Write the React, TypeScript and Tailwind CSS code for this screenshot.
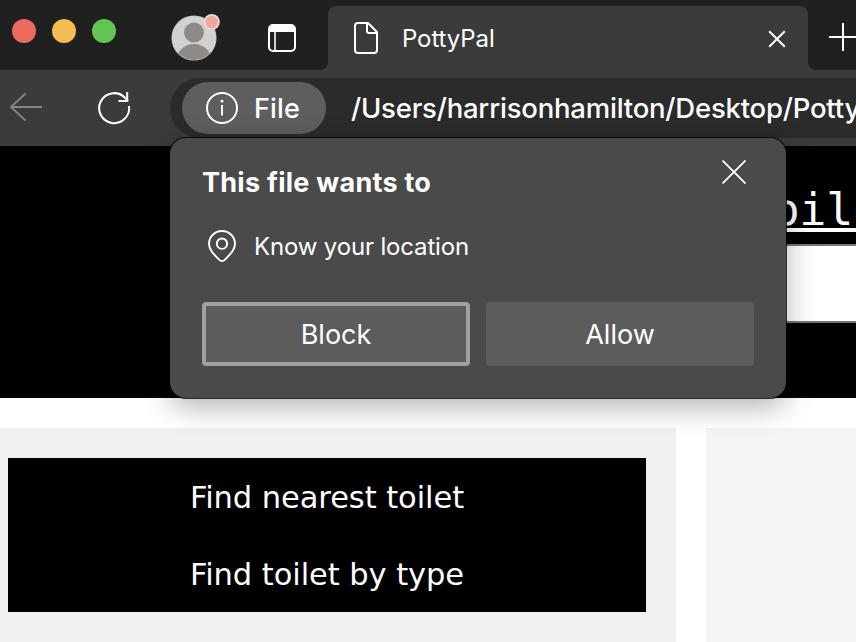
import React from "react";

const UI = "font-['Inter','Roboto',sans-serif]";

function Avatar() {
  return (
    <svg width="52" height="52" viewBox="168 12 52 52">
      <defs>
        <clipPath id="face">
          <circle cx="194" cy="38" r="22" />
        </clipPath>
      </defs>
      <circle cx="194" cy="38" r="22.6" fill="#b9b7b5" />
      <circle cx="194" cy="38" r="22" fill="#d3d1cf" />
      <g clipPath="url(#face)" fill="#8e8a87">
        <circle cx="194" cy="32.5" r="10" />
        <circle cx="194" cy="62.5" r="18.5" />
      </g>
      <circle cx="211.8" cy="22" r="8" fill="#e0dedd" />
      <circle cx="211.8" cy="22" r="6.3" fill="#f1a7a0" />
    </svg>
  );
}

function TabStrip() {
  return (
    <div className="flex h-[70px] w-full bg-[#3b3b3b]">
      <div className="flex w-[328px] shrink-0 rounded-br-lg bg-[#202020]">
        <div className="flex gap-4 pt-[19px] pl-3">
          <span className="size-6 rounded-full bg-[#ed6a5e]" />
          <span className="size-6 rounded-full bg-[#f5bf4f]" />
          <span className="size-6 rounded-full bg-[#61c554]" />
        </div>
        <div className="pt-3 pl-[52px]">
          <Avatar />
        </div>
        <div className="pt-6 pl-12">
          <svg width="28" height="28" viewBox="0 0 28 28" fill="none" stroke="#fff" strokeWidth="2">
            <rect x="1" y="1" width="26" height="26" rx="4" />
            <path d="M1 8V5a4 4 0 0 1 4-4h18a4 4 0 0 1 4 4v3z" fill="#fff" stroke="none" />
            <path d="M7 8v19" strokeWidth="1.6" />
          </svg>
        </div>
      </div>
      <div className="w-[480px] shrink-0 bg-[#202020] pt-[6px]">
        <div className="flex h-16 rounded-t-lg bg-[#3b3b3b] pl-[26px]">
          <svg className="mt-4" width="24" height="32" viewBox="0 0 24 32" fill="none" stroke="#fff" strokeWidth="2" strokeLinejoin="round">
            <path d="M4 1h10l9 9v18a3 3 0 0 1-3 3H4a3 3 0 0 1-3-3V4a3 3 0 0 1 3-3z" />
            <path d="M13 1v8a2 2 0 0 0 2 2h8" />
          </svg>
          <span className={`${UI} mt-4 ml-6 w-[366px] text-[24px] leading-[33px] tracking-[-0.1px] text-white`}>PottyPal</span>
          <svg className="mt-6" width="18" height="18" viewBox="0 0 18 18" stroke="#fff" strokeWidth="2">
            <path d="M1.2 1.2l15.6 15.6M16.8 1.2L1.2 16.8" />
          </svg>
        </div>
      </div>
      <div className="flex-1 overflow-hidden rounded-bl-lg bg-[#202020] pt-[23px] pl-[21px]">
        <svg width="28" height="28" viewBox="0 0 28 28" stroke="#fff" strokeWidth="2">
          <path d="M0 14h28M14 0v28" />
        </svg>
      </div>
    </div>
  );
}

function Toolbar() {
  return (
    <div className="flex h-[76px] w-full overflow-hidden bg-[#3b3b3b]">
      <svg className="mt-[22px] ml-[9px] shrink-0" width="34" height="30" viewBox="0 0 34 30" fill="none" stroke="#858585" strokeWidth="1.8">
        <path d="M33 15H2M16.5 1.5L2 15l14.500 13.500" />
      </svg>
      <svg className="mt-5 ml-[53px] shrink-0" width="36" height="36" viewBox="96 90 36 36" fill="none" stroke="#fff" strokeWidth="2">
        <path d="M129 106A15 15 0 1 1 124.500 97.300L128 100.800" />
        <path d="M127.200 92v9H118.500" />
      </svg>
      <div className="mt-2 ml-[38px] flex h-[60px] w-[720px] shrink-0 rounded-l-full bg-[#2b2b2b] pt-1 pl-3">
        <div className="flex h-[52px] w-[144px] shrink-0 items-center rounded-full bg-[#5e5e5e] pl-6">
          <svg className="shrink-0" width="32" height="32" viewBox="0 0 32 32" fill="none" stroke="#fff" strokeWidth="2">
            <circle cx="16" cy="16" r="15" />
            <path d="M16 13v10.500" />
            <circle cx="16" cy="9.200" r="1.400" fill="#fff" stroke="none" />
          </svg>
          <span className={`${UI} ml-4 pt-px text-[27px] leading-[53px] font-medium tracking-[0.2px] text-white`}>File</span>
        </div>
        <span className={`${UI} ml-[25px] text-[27.5px] leading-[52px] font-medium tracking-[-0.21px] whitespace-nowrap text-white`}>
          /Users/harrisonhamilton/Desktop/PottyPal
        </span>
      </div>
    </div>
  );
}

function PermissionDialog() {
  return (
    <div className={`${UI} absolute top-[138px] left-[170px] h-[260px] w-[616px] rounded-2xl bg-[#4a4a4a] px-8 text-white shadow-[0_0_0_1px_rgba(0,0,0,0.8),0_8px_30px_rgba(0,0,0,0.32)]`}>
      <div className="flex h-[66px] justify-between pt-[22px]">
        <h2 className="text-[27px] leading-[46px] font-bold tracking-[0.26px] whitespace-nowrap">This file wants to</h2>
        <svg className="mr-2" width="24" height="24" viewBox="0 0 24 24" stroke="#fff" strokeWidth="1.800">
          <path d="M0.500 0.500l23 23M23.500 0.500l-23 23" />
        </svg>
      </div>
      <div className="mt-[22px] flex h-10 items-center pl-[6px]">
        <svg width="28" height="32" viewBox="0 0 28 32" fill="none" stroke="#fff" strokeWidth="1.900">
          <path d="M14 1C6.800 1 1 6.700 1 13.700c0 5.400 3.900 9.800 10.300 16.200a3.800 3.800 0 0 0 5.400 0C23.100 23.500 27 19.100 27 13.700 27 6.700 21.200 1 14 1z" />
          <circle cx="14" cy="13.700" r="5.200" />
        </svg>
        <span className="ml-[18px] pt-px text-[24px] leading-[42px] tracking-[-0.16px] whitespace-nowrap">Know your location</span>
      </div>
      <div className="mt-9 flex gap-4">
        <button className="h-16 w-[268px] rounded border-4 border-[#9f9f9f] bg-[#5c5c5c] pt-px text-[27px] leading-[55px]">Block</button>
        <button className="h-16 w-[268px] rounded bg-[#5c5c5c] pt-px text-[27px] leading-[63px]">Allow</button>
      </div>
    </div>
  );
}

function Page() {
  return (
    <div className="h-[496px] bg-white">
      <header className="h-[252px] overflow-hidden bg-black pt-[34px] pl-[690px]">
        <h1 className="ml-[28px] h-16 font-['DejaVu_Sans_Mono',monospace] text-[45px] leading-[60px] whitespace-nowrap text-white underline decoration-4 underline-offset-[3px]">
          Mobile
        </h1>
        <div className="h-[79px] w-[400px] border-2 border-[#767676] bg-white" />
      </header>
      <div className="mt-[30px] flex h-[214px] gap-[30px]">
        <section className="w-[676px] shrink-0 bg-[#f0f0f0] pt-[30px] pl-2">
          <nav className="flex h-[154px] w-[638px] flex-col bg-black text-center font-['DejaVu_Sans',Verdana,sans-serif] text-[30.5px] leading-[79px] text-white">
            <a className="h-[77px] tracking-[-0.07px]">Find nearest toilet</a>
            <a className="h-[77px] tracking-[-0.07px]">Find toilet by type</a>
          </nav>
        </section>
        <section className="flex-1 bg-[#f4f4f4]" />
      </div>
    </div>
  );
}

export default function App() {
  return (
    <div className="relative h-[642px] w-[856px] overflow-hidden bg-white">
      <TabStrip />
      <Toolbar />
      <Page />
      <PermissionDialog />
    </div>
  );
}
